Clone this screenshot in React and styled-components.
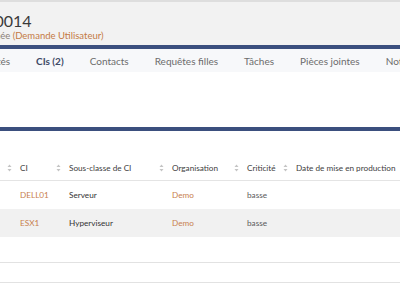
import styled, { createGlobalStyle } from 'styled-components';

const GlobalStyle = createGlobalStyle`
  body {
    margin: 0;
    background: #ffffff;
    font-family: Lato, 'Open Sans', sans-serif;
  }
`;

const tabs = [
  { label: 'Propriétés' },
  { label: 'CIs (2)', active: true },
  { label: 'Contacts' },
  { label: 'Requêtes filles' },
  { label: 'Tâches' },
  { label: 'Pièces jointes' },
  { label: 'Notifications' },
];

const columns = ['', 'CI', 'Sous-classe de CI', 'Organisation', 'Criticité', 'Date de mise en production'];

const rows = [
  { ci: 'DELL01', subclass: 'Serveur', org: 'Demo', criticity: 'basse' },
  { ci: 'ESX1', subclass: 'Hyperviseur', org: 'Demo', criticity: 'basse' },
];

function SortIcon() {
  return (
    <svg width='5' height='8' viewBox='0 0 5 8'>
      <path d='M2.5 0.5 L4.5 3 L0.5 3 Z' fill='#c4c4c4' />
      <path d='M2.5 7.5 L4.5 5 L0.5 5 Z' fill='#c4c4c4' />
    </svg>
  );
}

export default function App() {
  return (
    <>
      <GlobalStyle />
      <Viewport>
        <Header>
          <Title>R-000014</Title>
          <Subtitle>
            Assignée <Link>(Demande Utilisateur)</Link>
          </Subtitle>
        </Header>
        <TabBar>
          {tabs.map((tab) => (
            <Tab key={tab.label} $active={tab.active}>
              {tab.label}
            </Tab>
          ))}
        </TabBar>
        <TabPanel />
        <ListBlock>
          <Table>
            <HeadRow>
              {columns.map((col, i) => (
                <HeadCell key={i}>
                  <span>{col}</span>
                  {i < columns.length - 1 && <SortIcon />}
                </HeadCell>
              ))}
            </HeadRow>
            {rows.map((row, i) => (
              <Row key={row.ci} $odd={i % 2 === 1}>
                <Cell />
                <Cell $link>{row.ci}</Cell>
                <Cell>{row.subclass}</Cell>
                <Cell $link>{row.org}</Cell>
                <Cell $muted>{row.criticity}</Cell>
                <Cell />
              </Row>
            ))}
          </Table>
          <Footer />
          <FooterBar />
        </ListBlock>
      </Viewport>
    </>
  );
}

const Viewport = styled.div`
  width: 400px;
  height: 284px;
  overflow: hidden;
`;

const Header = styled.div`
  height: 43px;
  background: #f2f2f2;
  border-top: 2px solid #dedede;
  margin-left: -40px;
`;

const Title = styled.div`
  padding-top: 9px;
  font-size: 16px;
  line-height: 19px;
  color: #3a3a3a;
`;

const Subtitle = styled.div`
  margin-left: 13px;
  font-size: 9.5px;
  line-height: 12px;
  color: #8a7f77;
`;

const Link = styled.span`
  color: #c47a45;
`;

const TabBar = styled.div`
  display: flex;
  height: 23px;
  align-items: center;
  background: #f7f8fa;
  border-top: 4px solid #3b4f7e;
  margin-left: -48px;
  white-space: nowrap;
`;

const Tab = styled.div`
  padding: 0 13px;
  font-size: 10px;
  color: ${(p) => (p.$active ? '#3d4a66' : '#6c6c6c')};
  font-weight: ${(p) => (p.$active ? 700 : 400)};
`;

const TabPanel = styled.div`
  height: 55px;
  background: #ffffff;
`;

const ListBlock = styled.div`
  border-top: 4px solid #3b4f7e;
  padding-top: 25px;
`;

const Table = styled.div`
  display: flex;
  flex-direction: column;
`;

const grid = `
  display: grid;
  grid-template-columns: 17px 49px 103px 75px 49px 1fr;
`;

const HeadRow = styled.div`
  ${grid}
  height: 24px;
  border-bottom: 1px solid #e4e4e4;
`;

const HeadCell = styled.div`
  display: flex;
  align-items: center;
  justify-content: space-between;
  padding: 0 5px 0 3px;
  font-size: 8.2px;
  color: #404040;
  white-space: nowrap;
`;

const Row = styled.div`
  ${grid}
  height: 28px;
  background: ${(p) => (p.$odd ? '#f1f1f1' : '#ffffff')};
`;

const Cell = styled.div`
  display: flex;
  align-items: center;
  padding-left: 3px;
  font-size: 8.2px;
  color: ${(p) => (p.$link ? '#c8804e' : p.$muted ? '#5a5a5a' : '#333333')};
`;

const Footer = styled.div`
  height: 25px;
  border-bottom: 1px solid #e2e2e2;
`;

const FooterBar = styled.div`
  height: 19px;
  border-bottom: 1px solid #e2e2e2;
`;
